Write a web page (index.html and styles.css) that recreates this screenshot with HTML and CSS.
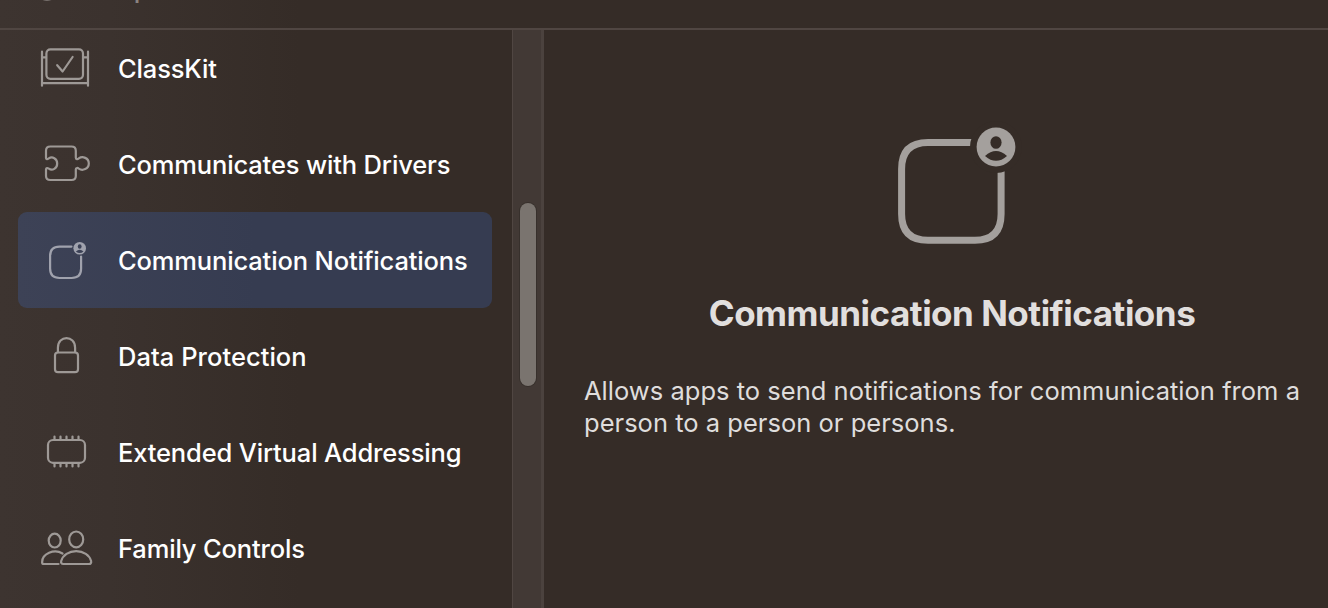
FILE: index.html
```html
<!DOCTYPE html>
<html lang="en">
<head>
  <meta charset="UTF-8">
  <meta name="viewport" content="width=device-width, initial-scale=1.0">
  <title>Capabilities</title>
  <link rel="stylesheet" href="styles.css">
</head>
<body>
<div class="window">
  <header class="filter-bar">
    <svg class="filter-icon" width="24" height="24" viewBox="0 0 24 24"><circle cx="12" cy="12" r="10.8"/></svg>
    <span class="filter-text">Capabilities</span>
  </header>

  <main class="content">
    <ul class="list">
      <li class="item">
        <svg class="icon" viewBox="0 0 60 60">
          <rect x="28.4" y="11.4" width="36.6" height="29.4" rx="4"/>
          <path d="M24 13.7v34M70 13.7v34M24 19.3h4M65 19.3h5M24 45.2h46M39.2 27.2l5.4 6.3L54.6 19"/>
        </svg>
        <span class="name">ClassKit</span>
      </li>
      <li class="item">
        <svg class="icon" viewBox="0 0 60 60">
          <path d="M28 24v-7.2q0-4.3 4.3-4.3h21.2q4.3 0 4.3 4.3v6.7c0 2.2 1.8 1.9 3 .9 3.7-2.6 10-.5 10 5.1s-6.3 7.6-10 5.2c-1.2-1-3-1.2-3 .8V42q0 4-4.3 4H32.3Q28 46 28 42v-6.5c0-2 1.5-1.7 2.8-.8 3.4 2.4 8.4-.1 8.4-5.2s-5-7.4-8.4-5.1c-1.5 1-2.8 1.1-2.8-.4z"/>
        </svg>
        <span class="name">Communicates with Drivers</span>
      </li>
      <li class="item selected">
        <svg class="icon notify" viewBox="0 0 60 60">
          <path d="M53.5 16.6H41.5q-9.4 0-9.4 9.4v12.6q0 9.4 9.4 9.4h12.2q9.4 0 9.4-9.4V26.6"/>
          <circle class="solid" cx="61.7" cy="18.3" r="6.3"/>
          <ellipse class="hole" cx="61.7" cy="16.5" rx="1.9" ry="2.2"/>
          <path class="hole" d="M57.9 21.5q3.8-3.4 7.6 0-3.8 3.1-7.6 0z"/>
        </svg>
        <span class="name">Communication Notifications</span>
      </li>
      <li class="item">
        <svg class="icon" viewBox="0 0 60 60">
          <rect x="37" y="26.5" width="23" height="19.7" rx="3"/>
          <path d="M39.9 26.2v-4.5c0-12.7 17.2-12.7 17.2 0v4.5"/>
        </svg>
        <span class="name protection">Data Protection</span>
      </li>
      <li class="item">
        <svg class="icon" viewBox="0 0 60 60">
          <rect x="30" y="18" width="37" height="22.8" rx="5"/>
          <path d="M36.5 14.6v3M42.5 14.6v3M48.5 14.6v3M54.5 14.6v3M60.5 14.6v3M36.5 41v3.4M42.5 41v3.4M48.5 41v3.4M54.5 41v3.4M60.5 41v3.4"/>
        </svg>
        <span class="name">Extended Virtual Addressing</span>
      </li>
      <li class="item">
        <svg class="icon" viewBox="0 0 60 60">
          <ellipse cx="36.7" cy="22.6" rx="6" ry="6.9"/>
          <ellipse cx="58.2" cy="21.4" rx="7" ry="7.9"/>
          <path d="M44.5 35.5c-8.5-5-20.4.4-20.4 8.7 0 1.2.8 1.8 1.7 1.8H40.5M45.2 46h25.6c1.8 0 2.8-1.1 2.3-3-1.6-5.9-7.6-9.8-14.9-9.8S44.8 37.1 43.2 43c-.5 1.9.4 3 2 3z"/>
        </svg>
        <span class="name">Family Controls</span>
      </li>
    </ul>

    <div class="scrollbar"><div class="thumb"></div></div>

    <section class="detail">
      <svg class="detail-icon" width="124" height="124" viewBox="0 0 124 124">
        <path d="M84 17.5H38q-26.4 0-26.4 26.5v45q0 26.3 26.4 26.3h47q26.1 0 26.1-26.3V40"/>
        <circle class="hole" cx="106" cy="22" r="26"/>
        <circle class="solid" cx="106" cy="22" r="19.4"/>
        <ellipse class="hole" cx="106" cy="17.5" rx="5.6" ry="6.3"/>
        <path class="hole" d="M95 31q11-10 22 0-11 9.7-22 0z"/>
      </svg>
      <h1>Communication Notifications</h1>
      <p>Allows apps to send notifications for communication from a person to a person or persons.</p>
    </section>
  </main>
</div>
</body>
</html>
```

FILE: styles.css
```css
* {
  box-sizing: border-box;
}
body {
  margin: 0;
  background: #352c28;
  color: #fff;
  font-family: Inter, "Liberation Sans", sans-serif;
}
.window {
  height: 608px;
  overflow: hidden;
  display: flex;
  flex-direction: column;
  background: linear-gradient(90deg, #3d3430 0, #3b322e 110px, #352c27 300px, #352c27 100%);
}
.filter-bar {
  flex: none;
  display: flex;
  align-items: flex-end;
  gap: 41px;
  height: 30px;
  padding: 0 0 28px 35px;
  border-bottom: 2px solid #504642;
  color: #8a8480;
}
.filter-icon {
  flex: none;
  margin-bottom: -1px;
  fill: none;
  stroke: #8a8480;
  stroke-width: 2;
}
.filter-text {
  font-size: 26px;
  font-weight: 500;
  line-height: 32px;
  margin-bottom: -5px;
}
.content {
  flex: 1;
  min-height: 0;
  display: flex;
}
.list {
  width: 512px;
  height: 578px;
  margin: 0;
  padding: 0 20px 0 18px;
  list-style: none;
  overflow: hidden;
}
.item {
  height: 96px;
  display: flex;
  align-items: center;
  border-radius: 9px;
}
.item:first-child {
  margin-top: -10px;
}
.selected {
  background: linear-gradient(90deg, #3d4256, #363c51 50%, #363c51);
}
.icon {
  width: 60px;
  height: 60px;
  margin-right: 40px;
  overflow: visible;
  fill: none;
  stroke: #9e9996;
  stroke-width: 2.2;
  stroke-linecap: round;
  stroke-linejoin: round;
}
.name {
  padding-top: 2px;
  font-size: 25.5px;
  font-weight: 500;
  line-height: 32px;
  letter-spacing: -0.15px;
  white-space: nowrap;
}
.protection {
  letter-spacing: 0.04px;
}
.notify {
  stroke: #a0a2ad;
}
.notify .solid {
  fill: #a0a2ad;
}
.notify .hole {
  fill: #3b4156;
}
.icon .solid, .icon .hole,
.detail-icon .solid, .detail-icon .hole {
  stroke: none;
}
.scrollbar {
  flex: none;
  width: 32px;
  padding: 173px 0 0 8px;
  background: #423935;
  border-left: 1px solid #504642;
  border-right: 3px solid #4b423e;
}
.thumb {
  width: 16px;
  height: 183px;
  margin-left: -1px;
  border-radius: 8px;
  background: #7a746f;
  box-shadow: 0 0 0 1px #37302c;
}
.detail {
  flex: 1;
  display: flex;
  flex-direction: column;
  align-items: center;
  padding: 95px 0 0 40px;
}
.detail-icon {
  margin-right: 8px;
  overflow: visible;
  fill: none;
  stroke: #a4a09d;
  stroke-width: 7;
}
.detail-icon .solid {
  fill: #a4a09d;
}
.detail-icon .hole {
  fill: #352c27;
}
h1 {
  margin: 42px 8px 0 0;
  font-size: 35px;
  font-weight: 700;
  line-height: 44px;
  letter-spacing: -0.5px;
  color: #e1dfde;
  white-space: nowrap;
}
p {
  width: 744px;
  margin: 40px 0 0;
  font-size: 25.5px;
  line-height: 32px;
  letter-spacing: 0.02px;
  color: #dfdddc;
}
```
